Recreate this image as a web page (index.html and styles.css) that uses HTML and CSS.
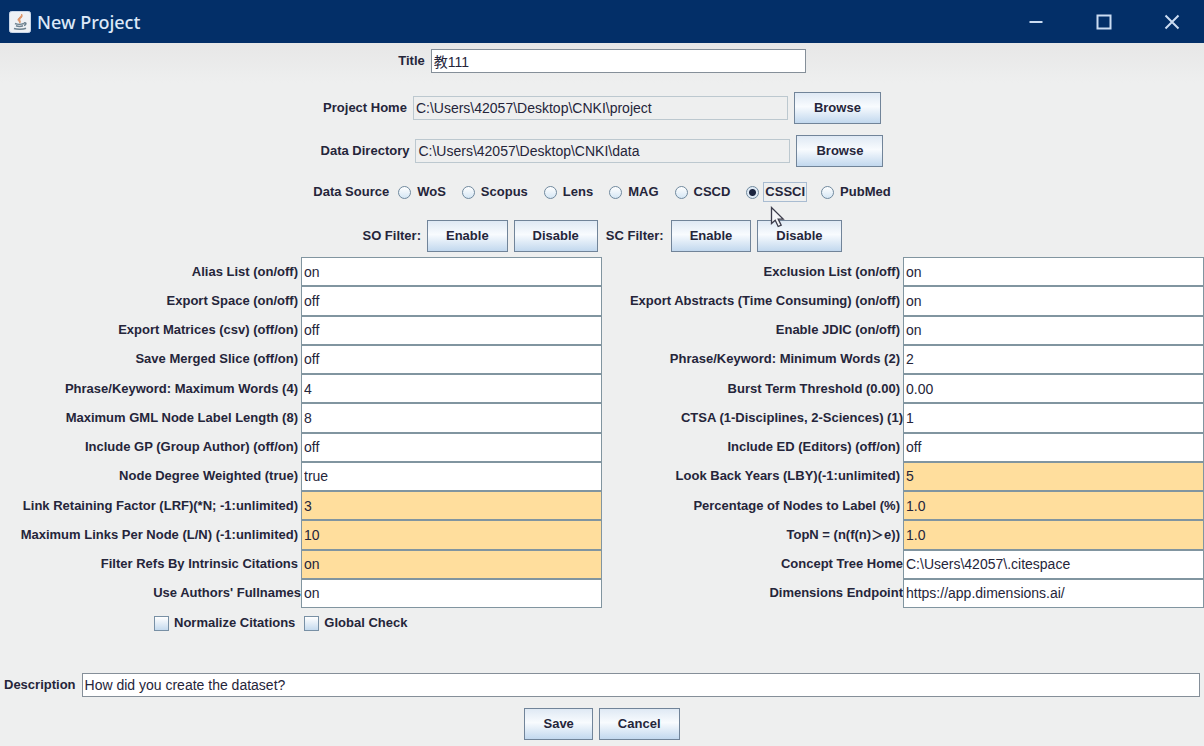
FILE: index.html
```
<!DOCTYPE html>
<html lang="en">
<head>
<meta charset="utf-8">
<title>New Project</title>
<link rel="stylesheet" href="styles.css">
</head>
<body>
<header class="titlebar">
  <svg class="app-icon" width="22" height="22" viewBox="0 0 22 22" aria-hidden="true">
    <rect x="0.500" y="0.500" width="21" height="21" rx="2" fill="#eef1f5" stroke="#c9d6e8"/>
    <path d="M12.500 3c1 2-4 4-3.500 6 .3 1.200 2 1.800 1.700 3.200C12.500 10 9.500 9.200 11.500 7.600 12.600 6.800 14 5 12.500 3z" fill="#dd9468" stroke="#dd9468"/>
    <path d="M6 12.500c2 1 6.500 1 9 0M7 14.800c2 .8 5 .8 7 0M5 17.500c3 1 9 1 12-.3M15 12c2.500-.6 2.500 2 0 2.500" fill="none" stroke="#6d8290" stroke-width="1.600"/>
  </svg>
  <h1 class="window-title">New Project</h1>
  <div class="window-controls">
    <button type="button" aria-label="Minimize"><svg width="16" height="16" viewBox="0 0 16 16"><path d="M1.500 8h13"/></svg></button>
    <button type="button" aria-label="Maximize"><svg width="16" height="16" viewBox="0 0 16 16"><rect x="1.500" y="1.500" width="13" height="13"/></svg></button>
    <button type="button" aria-label="Close"><svg width="16" height="16" viewBox="0 0 16 16"><path d="M1.500 1.500l13 13M14.500 1.500l-13 13"/></svg></button>
  </div>
</header>
<form class="project">
  <div class="line line-title">
    <label for="title">Title</label>
    <input class="text" id="title" type="text" value="教111">
  </div>
  <div class="line">
    <label for="home">Project Home</label>
    <input class="text readonly" id="home" type="text" readonly value="C:\Users\42057\Desktop\CNKI\project">
    <button class="btn browse" type="button">Browse</button>
  </div>
  <div class="line line-data">
    <label for="data">Data Directory</label>
    <input class="text readonly" id="data" type="text" readonly value="C:\Users\42057\Desktop\CNKI\data">
    <button class="btn browse" type="button">Browse</button>
  </div>
  <div class="line sources" role="radiogroup" aria-labelledby="source-label">
    <span id="source-label">Data Source</span>
    <label class="radio"><input type="radio" name="source"><span>WoS</span></label>
    <label class="radio"><input type="radio" name="source"><span>Scopus</span></label>
    <label class="radio"><input type="radio" name="source"><span>Lens</span></label>
    <label class="radio"><input type="radio" name="source"><span>MAG</span></label>
    <label class="radio"><input type="radio" name="source"><span>CSCD</span></label>
    <label class="radio current"><input type="radio" name="source" checked><span>CSSCI</span>
      <svg class="pointer" width="15" height="22" viewBox="0 0 15 22" aria-hidden="true"><path d="M1.500 1.500v16l3.700-3.300 3 6.300 3-1.400-3-6h5z" fill="#f4f5f7" stroke="#3b3b4a" stroke-width="1.300"/></svg>
    </label>
    <label class="radio"><input type="radio" name="source"><span>PubMed</span></label>
  </div>
  <div class="line filters">
    <span>SO Filter:</span>
    <button class="btn" type="button">Enable</button>
    <button class="btn" type="button">Disable</button>
    <span class="second">SC Filter:</span>
    <button class="btn" type="button">Enable</button>
    <button class="btn" type="button">Disable</button>
  </div>
  <div class="options">
    <label for="o1">Alias List (on/off)</label><input id="o1" type="text" value="on">
    <label for="o2">Exclusion List (on/off)</label><input id="o2" type="text" value="on">
    <label for="o3">Export Space (on/off)</label><input id="o3" type="text" value="off">
    <label for="o4">Export Abstracts (Time Consuming) (on/off)</label><input id="o4" type="text" value="on">
    <label for="o5">Export Matrices (csv) (off/on)</label><input id="o5" type="text" value="off">
    <label for="o6">Enable JDIC (on/off)</label><input id="o6" type="text" value="on">
    <label for="o7">Save Merged Slice (off/on)</label><input id="o7" type="text" value="off">
    <label for="o8">Phrase/Keyword: Minimum Words (2)</label><input id="o8" type="text" value="2">
    <label for="o9">Phrase/Keyword: Maximum Words (4)</label><input id="o9" type="text" value="4">
    <label for="o10">Burst Term Threshold (0.00)</label><input id="o10" type="text" value="0.00">
    <label for="o11">Maximum GML Node Label Length (8)</label><input id="o11" type="text" value="8">
    <label class="flush" for="o12">CTSA (1-Disciplines, 2-Sciences) (1)</label><input id="o12" type="text" value="1">
    <label for="o13">Include GP (Group Author) (off/on)</label><input id="o13" type="text" value="off">
    <label for="o14">Include ED (Editors) (off/on)</label><input id="o14" type="text" value="off">
    <label for="o15">Node Degree Weighted (true)</label><input id="o15" type="text" value="true">
    <label for="o16">Look Back Years (LBY)(-1:unlimited)</label><input class="key" id="o16" type="text" value="5">
    <label for="o17">Link Retaining Factor (LRF)(*N; -1:unlimited)</label><input class="key" id="o17" type="text" value="3">
    <label for="o18">Percentage of Nodes to Label (%)</label><input class="key" id="o18" type="text" value="1.0">
    <label for="o19">Maximum Links Per Node (L/N) (-1:unlimited)</label><input class="key" id="o19" type="text" value="10">
    <label for="o20">TopN = (n(f(n)＞e))</label><input class="key" id="o20" type="text" value="1.0">
    <label for="o21">Filter Refs By Intrinsic Citations</label><input class="key" id="o21" type="text" value="on">
    <label class="flush" for="o22">Concept Tree Home</label><input id="o22" type="text" value="C:\Users\42057\.citespace">
    <label class="flush" for="o23">Use Authors' Fullnames</label><input id="o23" type="text" value="on">
    <label class="flush" for="o24">Dimensions Endpoint</label><input id="o24" type="text" value="https://app.dimensions.ai/">
  </div>
  <div class="checks">
    <label class="check"><input type="checkbox"><span>Normalize Citations</span></label>
    <label class="check"><input type="checkbox"><span>Global Check</span></label>
  </div>
  <div class="description">
    <label for="description">Description</label>
    <input class="text" id="description" type="text" value="How did you create the dataset?">
  </div>
  <div class="actions">
    <button class="btn" type="button">Save</button>
    <button class="btn" type="button">Cancel</button>
  </div>
</form>
</body>
</html>
```
FILE: styles.css
```
* { box-sizing: border-box; }
body {
  margin: 0;
  min-height: 100vh;
  background: #eeefef;
  color: #25253a;
  font: bold 13px/16px "Liberation Sans", "Noto Sans CJK SC", sans-serif;
}
button, input { font: inherit; color: inherit; margin: 0; }
.titlebar {
  display: flex;
  align-items: center;
  height: 43px;
  padding-left: 9px;
  background: #032f68;
  color: #dce8f8;
}
.window-title { margin: 0 0 0 6px; font: 500 18px/24px "Noto Sans", sans-serif; }
.window-controls { display: flex; margin-left: auto; }
.window-controls button {
  display: grid;
  place-items: center;
  width: 68px;
  height: 43px;
  padding: 0 0 0 4px;
  border: 0;
  background: none;
}
.window-controls svg { fill: none; stroke: #cbdcf2; stroke-width: 2; }
.project { background: linear-gradient(#e7e7e7, #eeefef 40px); }
.line {
  display: flex;
  justify-content: center;
  align-items: center;
  gap: 6px;
  padding-bottom: 11px;
}
.line-title { padding: 6px 0 19px; }
.line-data { padding-bottom: 17px; }
.text {
  width: 375px;
  height: 24px;
  padding: 0 2px;
  border: 1px solid #858f99;
  background: #fff;
  font-size: 14px;
  font-weight: normal;
}
.text.readonly { border-color: #bcc8cf; background: #eeefef; }
.btn {
  height: 32px;
  padding: 0 18px;
  border: 1px solid #718499;
  border-radius: 0;
  background: linear-gradient(#dfe9f4, #f8fbfe 45%, #c2d8ee);
}
.btn.browse { padding: 0 19px; }
.sources { gap: 16px; padding-bottom: 20px; }
.sources > span { margin-right: -7px; }
.radio { position: relative; display: flex; align-items: center; gap: 6px; }
.radio input {
  appearance: none;
  width: 13px;
  height: 13px;
  border: 1px solid #70899e;
  border-radius: 50%;
  background: linear-gradient(#fff, #d5e6f4);
}
.radio input:checked { background: radial-gradient(circle, #1c2540 3px, #dfeaf5 4px); }
.current span { outline: 1px solid #a9bcd1; outline-offset: 1px; }
.pointer { position: absolute; left: 24px; top: 22px; z-index: 1; }
.filters { padding-bottom: 5px; }
.filters .second { padding: 0 1px 0 2px; }
.options {
  display: grid;
  grid-template-columns: repeat(4, 1fr);
  grid-template-rows: repeat(12, 1fr);
  min-height: 351px;
}
.options label { justify-self: end; align-self: center; padding-right: 3px; white-space: nowrap; }
.options .flush { padding-right: 0; }
.options input {
  width: 100%;
  min-width: 0;
  padding: 0 2px;
  border: 1px solid #8195a0;
  background: #fff;
  font-size: 14px;
  font-weight: normal;
}
.options .key { background: #ffde9d; }
.checks { display: flex; gap: 9px; padding: 7px 0 42px 154px; }
.check { display: flex; align-items: center; gap: 5px; }
.check input {
  appearance: none;
  width: 15px;
  height: 15px;
  border: 1px solid #7890a5;
  background: linear-gradient(#fff, #c5daee);
}
.description { display: flex; align-items: center; gap: 6px; padding: 0 4px; }
.description .text { flex: 1; }
.actions { display: flex; justify-content: center; gap: 6px; padding: 11px 0 5px; }
```
